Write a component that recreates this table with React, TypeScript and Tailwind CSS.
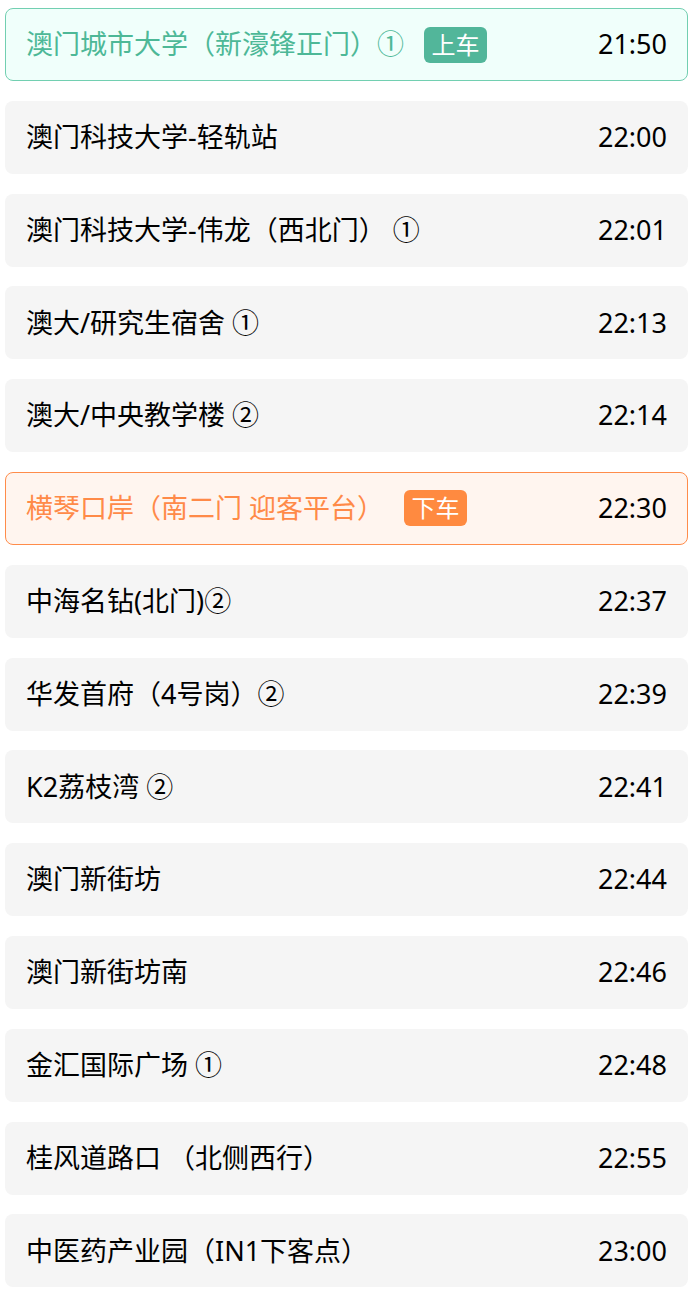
import React from "react";

type Stop = { name: string; time: string; kind?: "up" | "down" };

const stops: Stop[] = [
  { name: "澳门城市大学（新濠锋正门）①", time: "21:50", kind: "up" },
  { name: "澳门科技大学-轻轨站", time: "22:00" },
  { name: "澳门科技大学-伟龙（西北门） ①", time: "22:01" },
  { name: "澳大/研究生宿舍 ①", time: "22:13" },
  { name: "澳大/中央教学楼 ②", time: "22:14" },
  { name: "横琴口岸（南二门 迎客平台）", time: "22:30", kind: "down" },
  { name: "中海名钻(北门)②", time: "22:37" },
  { name: "华发首府（4号岗）②", time: "22:39" },
  { name: "K2荔枝湾 ②", time: "22:41" },
  { name: "澳门新街坊", time: "22:44" },
  { name: "澳门新街坊南", time: "22:46" },
  { name: "金汇国际广场 ①", time: "22:48" },
  { name: "桂风道路口 （北侧西行）", time: "22:55" },
  { name: "中医药产业园（IN1下客点）", time: "23:00" },
];

function Row({ s }: { s: Stop }) {
  if (s.kind === "up") {
    return (
      <div className="flex h-[73px] items-center justify-between rounded-[8px] border border-[#72cfb1] bg-[#f0fffb] px-[20px]">
        <div className="flex items-center">
          <span className="text-[#4db897]">{s.name}</span>
          <span className="ml-[20px] flex h-[36px] w-[63px] items-center justify-center rounded-[6px] bg-[#52b69a] text-[24px] text-white">
            上车
          </span>
        </div>
        <span className="text-black">{s.time}</span>
      </div>
    );
  }
  if (s.kind === "down") {
    return (
      <div className="flex h-[73px] items-center justify-between rounded-[8px] border border-[#ff8c4a] bg-[#fff5ef] px-[20px]">
        <div className="flex items-center">
          <span className="text-[#ff8a48]">{s.name}</span>
          <span className="ml-[20px] flex h-[36px] w-[63px] items-center justify-center rounded-[6px] bg-[#ff8a40] text-[24px] text-white">
            下车
          </span>
        </div>
        <span className="text-black">{s.time}</span>
      </div>
    );
  }
  return (
    <div className="flex h-[73px] items-center justify-between rounded-[8px] bg-[#f5f5f5] px-[21px]">
      <span className="text-black">{s.name}</span>
      <span className="text-black">{s.time}</span>
    </div>
  );
}

export default function App() {
  return (
    <div
      className="min-h-screen bg-white px-[5px] pt-[8px] text-[27px]"
      style={{ fontFamily: '"Noto Sans", "Noto Sans CJK SC", sans-serif' }}
    >
      <div className="flex flex-col gap-[19.8px]">
        {stops.map((s) => (
          <Row key={s.name} s={s} />
        ))}
      </div>
    </div>
  );
}
